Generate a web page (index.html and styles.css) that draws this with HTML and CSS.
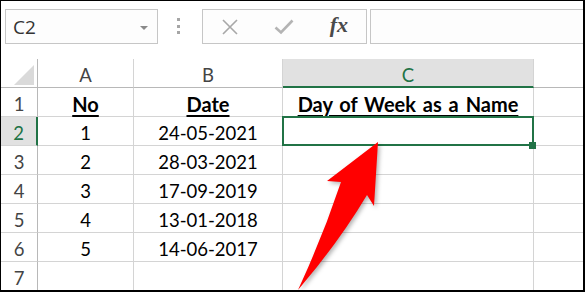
FILE: index.html
```html
<!DOCTYPE html>
<html>
<head>
    <title>Day of Week</title>
    <link rel="stylesheet" href="styles.css">
</head>
<body>
    <div class="excel">
        <div class="toolbar">
            <div class="namebox">
                <span>C2</span>
                <span class="caret"></span>
            </div>
            <div class="grip"><i></i><i></i><i></i></div>
            <div class="fx-buttons">
                <svg width="18" height="18" viewBox="0 0 18 18">
                    <path d="M2 2 L16 16 M16 2 L2 16" stroke="#a8a8a8" stroke-width="1.6" fill="none"/>
                </svg>
                <svg width="20" height="16" viewBox="0 0 20 16">
                    <path d="M1.5 8.5 L7 13.5 L18.5 1.5" stroke="#b4b4b4" stroke-width="2.6" fill="none"/>
                </svg>
                <span class="fx">fx</span>
            </div>
            <div class="formula"></div>
        </div>

        <div class="sheet">
            <div class="cell corner"><div class="tri"></div></div>
            <div class="cell colhead">A</div>
            <div class="cell colhead">B</div>
            <div class="cell colhead selected">C</div>
            <div class="cell colhead last"></div>

            <div class="cell rowhead">1</div>
            <div class="cell title">No</div>
            <div class="cell title">Date</div>
            <div class="cell title">Day of Week as a Name</div>
            <div class="cell last"></div>

            <div class="cell rowhead selected">2</div>
            <div class="cell">1</div>
            <div class="cell">24-05-2021</div>
            <div class="cell active"></div>
            <div class="cell last"></div>

            <div class="cell rowhead">3</div>
            <div class="cell">2</div>
            <div class="cell">28-03-2021</div>
            <div class="cell"></div>
            <div class="cell last"></div>

            <div class="cell rowhead">4</div>
            <div class="cell">3</div>
            <div class="cell">17-09-2019</div>
            <div class="cell"></div>
            <div class="cell last"></div>

            <div class="cell rowhead">5</div>
            <div class="cell">4</div>
            <div class="cell">13-01-2018</div>
            <div class="cell"></div>
            <div class="cell last"></div>

            <div class="cell rowhead">6</div>
            <div class="cell">5</div>
            <div class="cell">14-06-2017</div>
            <div class="cell"></div>
            <div class="cell last"></div>

            <div class="cell rowhead">7</div>
            <div class="cell"></div>
            <div class="cell"></div>
            <div class="cell"></div>
            <div class="cell last"></div>
        </div>

        <!-- pointer arrow on top of the sheet -->
        <svg class="arrow" width="585" height="292" viewBox="0 0 585 292">
            <path d="M378 142 L374 206 L367 195 Q339 242 298 290 Q323 236 341 182 L327 181 Z" fill="#ff0000"/>
        </svg>
    </div>
</body>
</html>
```

FILE: styles.css
```css
body {
    margin: 0;
}
.excel {
    position: relative;
    width: 585px;
    height: 292px;
    box-sizing: border-box;
    border-style: solid;
    border-color: #000;
    border-width: 1px 2px 2px 1px;
    background: #fff;
    overflow: hidden;
    font-family: Lato, "Liberation Sans", sans-serif;
}
.toolbar {
    display: flex;
    height: 58px;
    box-sizing: border-box;
    padding: 8px 0 0 4px;
}
.namebox {
    width: 153px;
    height: 35px;
    box-sizing: border-box;
    border: 1px solid #c6c6c6;
    background: #fdfdfd;
    display: flex;
    align-items: center;
    justify-content: space-between;
    padding: 0 9px 0 7px;
    font-family: "Open Sans", sans-serif;
    font-size: 19px;
    color: #333;
}
.caret {
    width: 0;
    height: 0;
    border-left: 4px solid transparent;
    border-right: 4px solid transparent;
    border-top: 4px solid #8a8a8a;
    margin-top: 2px;
}
.grip {
    width: 40px;
    display: flex;
    flex-direction: column;
    align-items: center;
    gap: 3.5px;
    padding-top: 9px;
}
.grip i {
    display: block;
    width: 3px;
    height: 3px;
    background: #a6a6a6;
}
.fx-buttons {
    width: 165px;
    height: 35px;
    box-sizing: border-box;
    margin-left: 4px;
    border: 1px solid #c6c6c6;
    background: #fdfdfd;
    display: grid;
    grid-template-columns: 1fr 1fr 1fr;
    place-items: center;
}
.fx {
    font-family: "Liberation Serif", serif;
    font-style: italic;
    font-weight: bold;
    font-size: 22px;
    color: #4a4a4a;
    margin-top: -3px;
}
.formula {
    flex: 1;
    height: 35px;
    box-sizing: border-box;
    margin-left: 3px;
    border: 1px solid #c6c6c6;
    border-right: none;
    background: #fdfdfd;
}
.sheet {
    display: grid;
    grid-template-columns: 37px 96px 149px 251px 1fr;
    grid-auto-rows: 29px;
}
.cell {
    box-sizing: border-box;
    border-right: 1px solid #d4d4d4;
    border-bottom: 1px solid #d4d4d4;
    display: flex;
    align-items: center;
    justify-content: center;
    padding-top: 3px;
    font-size: 18.5px;
    color: #000;
    white-space: nowrap;
}
.cell.last {
    border-right: none;
}
.corner {
    align-items: flex-end;
    justify-content: flex-end;
    padding: 0 3px 2px 0;
    border-right-color: #b8b8b8;
    border-bottom-color: #b8b8b8;
}
.tri {
    width: 20px;
    height: 20px;
    background: #dadada;
    clip-path: polygon(100% 0, 100% 100%, 0 100%);
}
.colhead {
    color: #444;
    border-bottom-color: #b8b8b8;
}
.rowhead {
    color: #444;
    border-right-color: #b8b8b8;
}
.colhead.selected {
    background: #e1e1e1;
    color: #217346;
    border-bottom: 2px solid #217346;
    padding-top: 4px;
}
.rowhead.selected {
    background: #e1e1e1;
    color: #217346;
    border-right: 2px solid #217346;
}
.title {
    font-weight: bold;
    font-size: 20px;
    word-spacing: 2px;
    text-decoration: underline;
    text-decoration-thickness: 2px;
    text-underline-offset: 3px;
}
.active {
    position: relative;
}
.active::after {
    content: "";
    position: absolute;
    inset: -1px;
    border: 2px solid #217346;
}
.active::before {
    content: "";
    position: absolute;
    right: -3px;
    bottom: -4px;
    width: 7px;
    height: 7px;
    background: #217346;
    z-index: 1;
}
.arrow {
    position: absolute;
    left: -1px;
    top: -1px;
    z-index: 2;
    filter: drop-shadow(2px 2px 2px rgba(0, 0, 0, 0.3));
}
```
